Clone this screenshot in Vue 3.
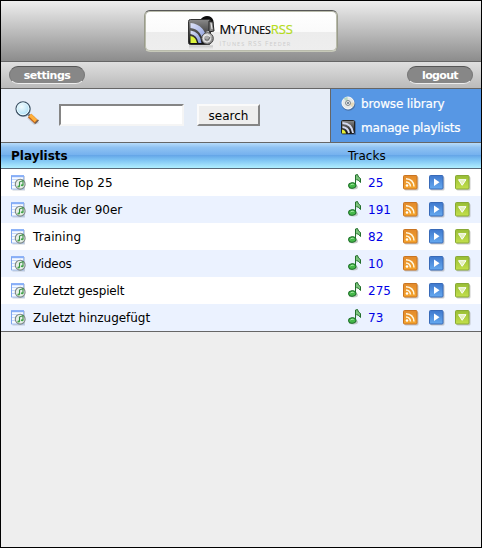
<script setup>
const playlists = [
  { name: 'Meine Top 25', tracks: 25, spacing: '0.03px' },
  { name: 'Musik der 90er', tracks: 191, spacing: '-0.03px' },
  { name: 'Training', tracks: 82, spacing: '0.1px' },
  { name: 'Videos', tracks: 10, spacing: '-0.2px' },
  { name: 'Zuletzt gespielt', tracks: 275, spacing: '-0.15px' },
  { name: 'Zuletzt hinzugefügt', tracks: 73, spacing: '-0.03px' },
]
</script>

<template>
  <div class="page">
    <svg class="defs" width="0" height="0">
      <defs>
        <linearGradient id="orange" x1="0" y1="0" x2="0" y2="1">
          <stop offset="0" stop-color="#e28a2c" /><stop offset="1" stop-color="#f6a52c" />
        </linearGradient>
        <linearGradient id="blue" x1="0" y1="0" x2="0" y2="1">
          <stop offset="0" stop-color="#3f78cd" /><stop offset="1" stop-color="#66aaf0" />
        </linearGradient>
        <linearGradient id="green" x1="0" y1="0" x2="0" y2="1">
          <stop offset="0" stop-color="#98bd35" /><stop offset="1" stop-color="#c3e04c" />
        </linearGradient>
        <linearGradient id="dark" x1="0" y1="0" x2="0" y2="1">
          <stop offset="0" stop-color="#8a8a8a" /><stop offset="1" stop-color="#0c0c0c" />
        </linearGradient>
        <linearGradient id="wave" x1="0" y1="0" x2="1" y2="1">
          <stop offset="0" stop-color="#dfe4f8" /><stop offset="1" stop-color="#7c90d8" />
        </linearGradient>
        <linearGradient id="metal" x1="0" y1="0" x2="1" y2="1">
          <stop offset="0" stop-color="#f4f4f4" /><stop offset="1" stop-color="#777" />
        </linearGradient>
        <linearGradient id="reflect" x1="0" y1="0" x2="0" y2="1">
          <stop offset="0" stop-color="#aaa" stop-opacity=".7" /><stop offset="1" stop-color="#ddd" stop-opacity="0" />
        </linearGradient>
        <radialGradient id="lens" cx=".4" cy=".35" r=".7">
          <stop offset="0" stop-color="#f4fdff" /><stop offset="1" stop-color="#a5dcf6" />
        </radialGradient>
      </defs>
    </svg>

    <header class="banner">
      <div class="logo">
        <svg class="mark" width="30" height="36" viewBox="0 0 30 36">
          <path d="M13.500 5.500Q16 2 20 2Q25 2 26.500 7L26 13L21 8Z" fill="#0b0b0b" />
          <rect x="1.500" y="5.500" width="22" height="25" rx="2" fill="url(#dark)" stroke="#333" />
          <path d="M3.500 9Q18 10 21 29H16.500Q14 15 3.500 14Z" fill="url(#wave)" />
          <path d="M3.500 16.500Q13 17.500 14.500 29H11.500Q10 21 3.500 20Z" fill="url(#wave)" />
          <path d="M3.500 22Q9 23 10 29H3.500Z" fill="#dcf33d" />
          <path d="M22 7L26 8L27 17L22 18Z" fill="#888" stroke="#222" />
          <path d="M24 9L25 15" stroke="#eee" />
          <path d="M22 18L19 19" stroke="#ddd" stroke-width="2" />
          <circle cx="20.500" cy="24.500" r="5.800" fill="url(#metal)" stroke="#444" />
          <circle cx="20" cy="24.500" r="3.600" fill="#aaa" stroke="#f1f1f1" />
          <path d="M18 25Q21 28 23 23" fill="none" stroke="#666" />
          <rect x="2" y="31.500" width="24" height="4.500" fill="url(#reflect)" />
        </svg>
        <div class="wordmark">
          <div class="brand">M<small>Y</small>T<small>UNES</small><b>RSS</b></div>
          <div class="tagline">iT<small>UNES</small> RSS F<small>EEDER</small></div>
        </div>
      </div>
    </header>

    <nav class="menu">
      <a class="pill settings"><span>settings</span></a>
      <a class="pill logout"><span>logout</span></a>
    </nav>

    <section class="tools">
      <div class="search">
        <svg class="glass" width="28" height="28" viewBox="0 0 28 28">
          <path d="M13 18L20 25L25 23L20 16Z" fill="#8c94a0" opacity=".35" />
          <path d="M14 14L16 16" stroke="#566574" stroke-width="2" />
          <path d="M15.500 15.500L22.500 22" stroke="#c1661d" stroke-width="5" />
          <path d="M16 15L22 21" stroke="#ffb03b" stroke-width="3.300" />
          <path d="M21 23.500L24.500 20" stroke="#735f51" stroke-width="1.500" />
          <circle cx="9.500" cy="9.500" r="7.400" fill="#a6b5c2" />
          <circle cx="9" cy="8.800" r="7" fill="url(#lens)" stroke="#405366" stroke-width="1.200" />
          <circle cx="9" cy="8.800" r="5.900" fill="none" stroke="#e8faff" />
        </svg>
        <input class="field" type="text" aria-label="Search" />
        <button class="go"><span>search</span></button>
      </div>
      <div class="links">
        <a>
          <svg width="16" height="16" viewBox="0 0 16 16">
            <circle cx="7.500" cy="8" r="6.800" fill="#405c84" opacity=".6" />
            <circle cx="7" cy="7" r="6" fill="#e5e8e8" stroke="#fff" />
            <path d="M7 7L2.500 2.500A6 6 0 0 1 6.500 1Z" fill="#b8d8c3" />
            <path d="M7 7L11.500 11.500A6 6 0 0 0 13 6.500Z" fill="#e5d9b9" />
            <circle cx="7" cy="7" r="2.400" fill="#fff" stroke="#747b81" />
            <circle cx="7" cy="7" r="1" fill="#526373" />
          </svg>
          <span class="browse">browse library</span>
        </a>
        <a>
          <svg width="16" height="16" viewBox="0 0 16 16">
            <rect x="1" y="1" width="14" height="14" rx="1" fill="#254675" opacity=".5" />
            <rect x=".5" y=".5" width="13" height="13" rx="1" fill="url(#dark)" stroke="#222" />
            <path d="M1.500 3Q11 3.500 12 13M1.500 7Q7 7.500 8 13" fill="none" stroke="#d5daf0" stroke-width="2" />
            <path d="M1 9.500Q4.500 10 5 13.500H1Z" fill="#e4ef37" />
          </svg>
          <span class="manage">manage playlists</span>
        </a>
      </div>
    </section>

    <div class="heading"><b>Playlists</b><span>Tracks</span></div>
    <main class="list">
      <div v-for="item in playlists" :key="item.name" class="row">
        <svg class="playlist" width="16" height="16" viewBox="0 0 16 16">
          <rect x="1.500" y="1" width="12.500" height="14.500" fill="#9ba7b8" opacity=".5" />
          <rect x=".5" y=".5" width="12" height="13.500" fill="#f7fbff" stroke="#a6c1f2" />
          <path d="M0 1.200H13" stroke="#88aff8" stroke-width="2" />
          <path d="M1 4.500H12M1 7.500H12M1 10.500H12" stroke="#c5d8fb" />
          <path d="M.5 1V14" stroke="#7ea6ef" />
          <circle cx="9.200" cy="9.200" r="4.900" fill="#e7efea" stroke="#7e8783" stroke-width="1.100" />
          <path d="M8.500 11.500V7L12 5.500V10" fill="none" stroke="#3a8c42" stroke-width="1.100" />
          <ellipse cx="7.700" cy="11.500" rx="1.300" ry="1" fill="#42a648" />
          <ellipse cx="11.200" cy="10.300" rx="1.400" ry="1" fill="#42a648" />
        </svg>
        <span class="name" :style="{ letterSpacing: item.spacing }">{{ item.name }}</span>
        <svg class="note" width="15" height="17" viewBox="0 0 15 17">
          <ellipse cx="5.500" cy="13" rx="4.500" ry="2.500" fill="#a2aaa2" opacity=".6" />
          <path d="M7.500 11.500V1L9.500 .5Q10 3.500 12.500 4.500V8.500Q11 6 8.500 5.500" fill="#7cc47c" stroke="#226e2b" />
          <ellipse cx="4.300" cy="11.500" rx="3.700" ry="2.700" transform="rotate(-10 4.300 11.500)" fill="#46b94a" stroke="#1d7028" />
          <path d="M2.500 11Q4 9.700 5.700 10.500" fill="none" stroke="#a4e9a3" />
        </svg>
        <a class="count">{{ item.tracks }}</a>
        <svg class="action" width="16" height="16" viewBox="0 0 16 16">
          <rect x="1.500" y="1.500" width="14" height="14" rx="1.500" fill="#999" opacity=".5" />
          <rect x=".5" y=".5" width="13.500" height="13.500" rx="1" fill="url(#orange)" stroke="#c97522" />
          <path d="M3 3.700Q10.500 4 11 11.500M3 7Q7.200 7.300 7.500 11.500" fill="none" stroke="#fff7df" stroke-width="1.500" />
          <circle cx="4" cy="10.500" r="1.300" fill="#fff" />
        </svg>
        <svg class="action" width="16" height="16" viewBox="0 0 16 16">
          <rect x="1.500" y="1.500" width="14" height="14" rx="1.500" fill="#999" opacity=".5" />
          <rect x=".5" y=".5" width="13.500" height="13.500" rx="1" fill="url(#blue)" stroke="#386ab8" />
          <path d="M5 3.500L10.500 7.300L5 11Z" fill="#fff" />
        </svg>
        <svg class="action" width="16" height="16" viewBox="0 0 16 16">
          <rect x="1.500" y="1.500" width="14" height="14" rx="1.500" fill="#999" opacity=".5" />
          <rect x=".5" y=".5" width="13.500" height="13.500" rx="1" fill="url(#green)" stroke="#88a936" />
          <path d="M3.500 4.700H11L7.200 10.300Z" fill="#e4f1bd" stroke="#fff" stroke-width="1" stroke-linejoin="round" />
        </svg>
      </div>
    </main>
  </div>
</template>

<style>
body { margin: 0; background: #eee; }
</style>

<style scoped>
* { box-sizing: border-box; }
.page { width: 482px; height: 548px; overflow: hidden; border: 1px solid #000; background: #eee; color: #000; font: 12px/27px "DejaVu Sans", Verdana, sans-serif; }
.defs { display: block; }
svg { display: block; flex: none; }
.banner { display: flex; justify-content: center; height: 61px; padding-top: 9px; border-bottom: 1px solid #666; background: linear-gradient(#eee, #8c8c8c); }
.logo { display: flex; width: 194px; height: 42px; margin-right: 1px; padding-left: 42px; border: 1px solid; border-color: #555 #999b8b #c7c9b9; border-radius: 6px; background: linear-gradient(#fff, #fafafa 52%, #ececec 53%, #eee); box-shadow: inset 0 0 0 1px #b9bbab; }
.mark { margin-top: 3px; }
.wordmark { width: 80px; padding: 9px 0 0 3px; white-space: nowrap; }
.brand { font: 13px/18px "Open Sans", sans-serif; letter-spacing: -.1px; -webkit-text-stroke: .2px; }
.brand small { font-size: 10.5px; }
.brand b { font-weight: 400; color: #b5dc20; }
.tagline { font: 6.5px/9px "Open Sans", sans-serif; color: #ccc; letter-spacing: 1.05px; margin-top: 0; }
.tagline small { font-size: 5.500px; }
.menu { display: flex; justify-content: space-between; height: 27px; padding: 4px 8px 0; border-bottom: 1px solid #666; background: linear-gradient(#dfdfdf, #bababa); }
.pill { display: flex; justify-content: center; height: 18px; border: 1px solid; border-color: #555 #777 #eee; border-radius: 9px; background: #878787; color: #fff; font-weight: 700; font-size: 11px; line-height: 17px; }
.settings { width: 76px; letter-spacing: -.48px; }
.logout { width: 66px; letter-spacing: -.65px; }
.tools { display: flex; height: 54px; border-bottom: 1px solid #666; background: #e6edf7; }
.search { display: flex; align-items: flex-start; width: 329px; padding: 15px 0 0 13px; }
.glass { margin-top: -4px; }
.field { width: 125px; height: 22px; margin: 0 0 0 17px; padding: 2px; border: 2px solid; border-color: #858585 #f5f5f5 #f5f5f5 #858585; border-radius: 0; background: #fff; outline: 0; }
.go { width: 63px; height: 22px; margin: 0 0 0 13px; padding: 0; border: 2px solid; border-color: #fafafa #858585 #858585 #fafafa; border-radius: 0; background: #eee; color: #000; font: 12px/20px "DejaVu Sans", sans-serif; }
.links { width: 151px; padding: 3px 0 0 10px; border-left: 1px solid #666; background: #5797e4; color: #fff; line-height: 24px; }
.links a { display: flex; align-items: center; gap: 4px; height: 24px; white-space: nowrap; -webkit-text-stroke: .2px; }
.browse { letter-spacing: -.15px; }
.manage { letter-spacing: -.17px; }
.heading { display: flex; height: 26px; padding-left: 10px; border-bottom: 1px solid #596877; background: linear-gradient(#b8dcfa 0, #8fc2f2 18%, #75b1ee 48%, #66a7e8 50%, #79bff2 65%, #b0efff); line-height: 27px; }
.heading b { width: 337px; letter-spacing: 0; }
.list { border-bottom: 1px solid #666; }
.row { display: flex; align-items: flex-start; height: 27px; padding-left: 10px; background: #fff; line-height: 28px; }
.row:nth-child(even) { background: #ebf2ff; }
.playlist, .action { margin-top: 6px; }
.name { width: 321px; padding-left: 6px; white-space: nowrap; }
.note { margin-top: 5px; }
.count { width: 40px; padding-left: 5px; color: #0000e6; }
.action + .action { margin-left: 10px; }
</style>
